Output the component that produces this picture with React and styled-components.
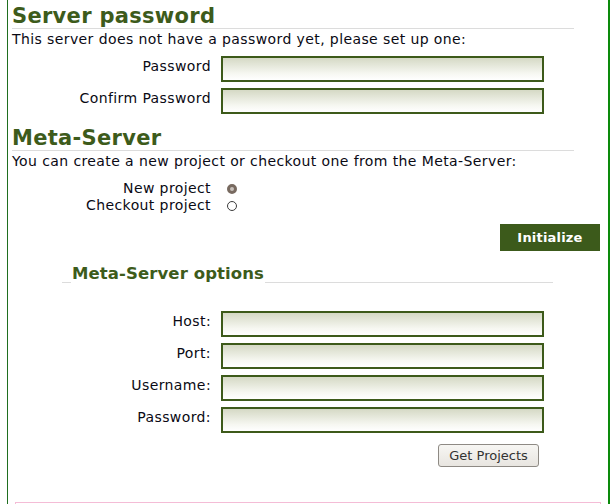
import React from "react";
import styled, { createGlobalStyle } from "styled-components";

const GlobalStyle = createGlobalStyle`
  body {
    margin: 0;
    background: #fff;
    font-family: "DejaVu Sans", Verdana, sans-serif;
    font-size: 14px;
    letter-spacing: 0.4px;
    color: #0a0a14;
  }
`;

const Page = styled.div`
  box-sizing: border-box;
  width: 603px;
  min-height: 504px;
  margin-left: 7px;
  border-left: 1px solid #1f6e1f;
  border-right: 2px solid #0c8a0c;
  padding: 0 8px 0 4px;
  overflow: hidden;
`;

const Heading = styled.h2`
  margin: ${(p) => p.$top}px 26px 0 0;
  font-size: 21px;
  line-height: 23px;
  letter-spacing: 0.3px;
  font-weight: bold;
  color: #3d5b1b;
  border-bottom: 1px solid #dcdcdc;
`;

const Intro = styled.p`
  margin: 2px 0 0;
  line-height: 17px;
`;

const FormGrid = styled.div`
  display: grid;
  grid-template-columns: 199px 323px;
  column-gap: 10px;
  row-gap: 6px;
  margin-top: ${(p) => p.$top}px;
`;

const Label = styled.label`
  text-align: right;
  align-self: start;
  padding-top: 2px;
  line-height: 17px;
`;

const TextInput = styled.input`
  box-sizing: border-box;
  height: 26px;
  width: 323px;
  border: 2px solid #3d5a1a;
  background: linear-gradient(to bottom, #d5d9c5, #f6f7f1 70%, #ffffff);
  padding: 0 4px;
  font: inherit;
  outline: none;
`;

const RadioGrid = styled.div`
  display: grid;
  grid-template-columns: 199px auto;
  column-gap: 6px;
  margin-top: 10px;
  line-height: 17px;
`;

const RadioLabel = styled.label`
  text-align: right;
`;

const Radio = styled.span`
  box-sizing: border-box;
  align-self: center;
  width: 10px;
  height: 10px;
  margin-left: 10px;
  border-radius: 50%;
  border: ${(p) => (p.$checked ? "3px solid #786a60" : "1px solid #3c3c3c")};
  background: ${(p) => (p.$checked ? "#c9c2bc" : "#fff")};
`;

const ButtonRow = styled.div`
  display: flex;
  justify-content: flex-end;
  margin-top: ${(p) => p.$top}px;
  padding-right: ${(p) => p.$right || 0}px;
`;

const PrimaryButton = styled.button`
  width: 100px;
  height: 27px;
  border: none;
  background: #3c5a1b;
  color: #fff;
  font-family: "DejaVu Sans", Verdana, sans-serif;
  font-weight: bold;
  font-size: 13px;
  letter-spacing: 0.2px;
  cursor: pointer;
`;

const Legend = styled.div`
  display: flex;
  margin: 13px 47px 0 50px;
  &::before,
  &::after {
    content: "";
    align-self: flex-end;
    margin-bottom: 1px;
    border-bottom: 1px solid #dcdcdc;
  }
  &::before {
    width: 9px;
  }
  &::after {
    flex: 1;
  }
`;

const LegendText = styled.span`
  padding: 0 1px;
  font-size: 16.5px;
  line-height: 20px;
  letter-spacing: 0.1px;
  font-weight: bold;
  color: #3d5b1b;
`;

const PlainButton = styled.button`
  width: 101px;
  height: 23px;
  border: 1px solid #8e8a84;
  border-radius: 3px;
  background: linear-gradient(to bottom, #f7f6f3, #e8e5e0);
  color: #333;
  font-family: "DejaVu Sans", Verdana, sans-serif;
  font-size: 13px;
  padding: 0;
  cursor: pointer;
`;

const Notice = styled.div`
  height: 20px;
  margin: 35px -1px 0 3px;
  border: 1px solid #f4bcd6;
`;

export default function App() {
  return (
    <Page>
      <GlobalStyle />
      <Heading $top={5}>Server password</Heading>
      <Intro>This server does not have a password yet, please set up one:</Intro>
      <FormGrid $top={8}>
        <Label>Password</Label>
        <TextInput type="password" />
        <Label>Confirm Password</Label>
        <TextInput type="password" />
      </FormGrid>

      <Heading $top={13}>Meta-Server</Heading>
      <Intro>You can create a new project or checkout one from the Meta-Server:</Intro>
      <RadioGrid>
        <RadioLabel>New project</RadioLabel>
        <Radio $checked />
        <RadioLabel>Checkout project</RadioLabel>
        <Radio />
      </RadioGrid>
      <ButtonRow $top={10}>
        <PrimaryButton>Initialize</PrimaryButton>
      </ButtonRow>

      <Legend>
        <LegendText>Meta-Server options</LegendText>
      </Legend>
      <FormGrid $top={27}>
        <Label>Host:</Label>
        <TextInput />
        <Label>Port:</Label>
        <TextInput />
        <Label>Username:</Label>
        <TextInput />
        <Label>Password:</Label>
        <TextInput type="password" />
      </FormGrid>
      <ButtonRow $top={11} $right={61}>
        <PlainButton>Get Projects</PlainButton>
      </ButtonRow>
      <Notice />
    </Page>
  );
}
